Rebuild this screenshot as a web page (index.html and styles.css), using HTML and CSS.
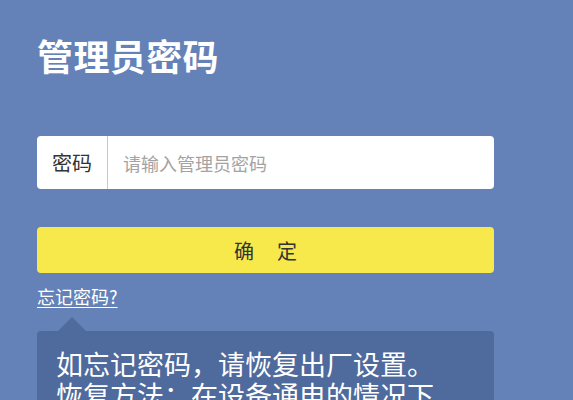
FILE: index.html
```html
<!DOCTYPE html>
<html lang="zh-CN">
<head>
<meta charset="utf-8">
<link rel="stylesheet" href="styles.css">
</head>
<body>
<main class="page">
  <h1 class="title">管理员密码</h1>
  <div class="field">
    <span class="field-label">密码</span>
    <span class="field-input">请输入管理员密码</span>
  </div>
  <div class="btn">确<span class="gap"></span>定</div>
  <a class="forgot">忘记密码?</a>
  <div class="tip">
    <p class="tip-text">如忘记密码，请恢复出厂设置。<br>恢复方法：在设备通电的情况下按住复位键五秒以上。</p>
  </div>
</main>
</body>
</html>
```
FILE: styles.css
```css
html, body {
  margin: 0;
  padding: 0;
  background: #6482b8;
  height: 400px;
  overflow: hidden;
}
.page {
  padding: 37px 0 0 37px;
  width: 457px;
  display: flex;
  flex-direction: column;
  font-family: "Noto Sans CJK SC", "Noto Sans", sans-serif;
}
.title {
  margin: 0;
  font-size: 36px;
  line-height: 36px;
  font-weight: 700;
  letter-spacing: 0.4px;
  color: #ffffff;
}
.field {
  margin-top: 63px;
  height: 53px;
  background: #ffffff;
  border-radius: 4px;
  display: flex;
  align-items: stretch;
}
.field-label {
  width: 70px;
  border-right: 1px solid #c9c9c9;
  display: flex;
  align-items: center;
  justify-content: center;
  font-size: 20px;
  color: #333333;
}
.field-input {
  display: flex;
  align-items: center;
  padding-left: 15px;
  font-size: 18px;
  color: #a3a3a3;
}
.btn {
  margin-top: 38px;
  height: 46px;
  background: #f7e94b;
  border-radius: 4px;
  display: flex;
  align-items: center;
  justify-content: center;
  font-size: 20px;
  color: #333333;
}
.gap {
  display: inline-block;
  width: 23px;
}
.forgot {
  margin-top: 14px;
  align-self: flex-start;
  font-size: 18px;
  line-height: 18px;
  color: #ffffff;
  text-decoration: underline;
  text-underline-offset: 3px;
}
.tip {
  position: relative;
  margin-top: 26px;
  background: #4f6a9d;
  border-radius: 4px;
  padding: 17px 40px 20px 19px;
}
.tip::before {
  content: "";
  position: absolute;
  left: 21px;
  top: -14px;
  border-left: 14px solid transparent;
  border-right: 14px solid transparent;
  border-bottom: 14px solid #4f6a9d;
}
.tip-text {
  margin: 0;
  font-size: 27px;
  line-height: 31px;
  color: #ffffff;
}
```
